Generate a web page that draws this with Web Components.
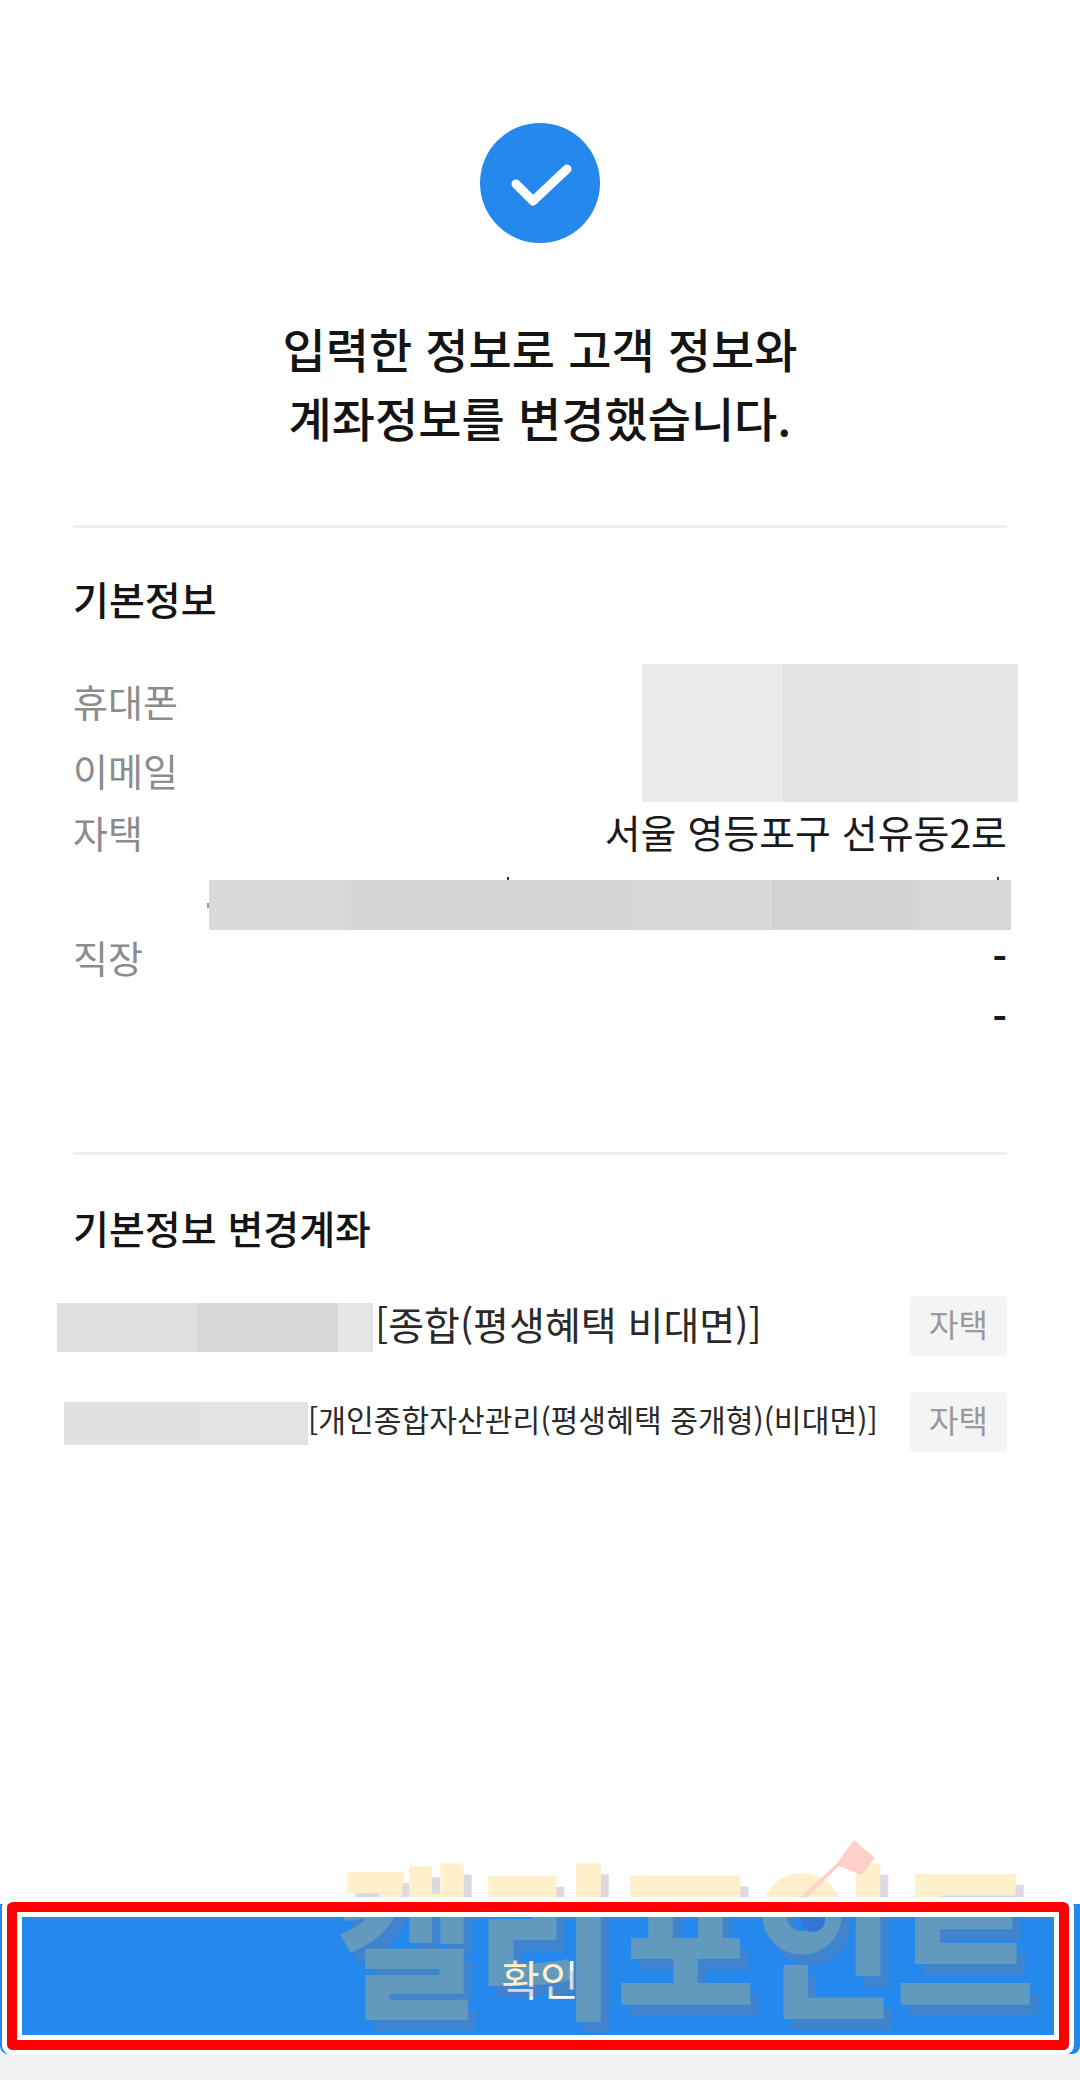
<!DOCTYPE html>
<html lang="ko">
<head>
<meta charset="utf-8">
<title>변경 완료</title>
<style>
  html, body { margin: 0; padding: 0; background: #fff; }
  body { font-family: "Noto Sans CJK KR", "Noto Sans", sans-serif; }
</style>
</head>
<body>
<result-page>
  <check-badge></check-badge>
  <result-title>입력한 정보로 고객 정보와<br>계좌정보를 변경했습니다.</result-title>

  <info-section heading="기본정보" class="basic">
    <info-row label="휴대폰" size="70"></info-row>
    <info-row label="이메일" size="68"></info-row>
    <info-row label="자택" size="56">서울 영등포구 선유동2로</info-row>
    <info-row size="67"></info-row>
    <info-row label="직장" size="60"><b>-</b></info-row>
    <info-row size="60"><b>-</b></info-row>
    <mask-block slot="over" style="left:642px;top:136px;width:376px;height:138px" cells="#ebebeb:140,#e4e4e4:141,#e6e6e6:95"></mask-block>
    <mask-block slot="over" style="left:507px;top:349px;width:2px;height:3px" cells="#333333:2"></mask-block>
    <mask-block slot="over" style="left:997px;top:349px;width:2px;height:3px" cells="#333333:2"></mask-block>
    <mask-block slot="over" style="left:207px;top:375px;width:2px;height:5px" cells="#999999:2"></mask-block>
    <mask-block slot="over" style="left:209px;top:352px;width:802px;height:50px" cells="#d9d9d9:141,#d6d6d6:146,#d5d5d5:136,#d8d8d8:140,#d2d2d2:141,#d7d7d7:98"></mask-block>
  </info-section>

  <info-section heading="기본정보 변경계좌" class="accounts">
    <account-row badge="자택" inset="57" gap="2" size="39" tall="60">
      <mask-block slot="mask" style="width:316px;height:49px;margin-top:3px" cells="#e0e0e0:140,#d8d8d8:141,#e6e6e6:35"></mask-block>
      [종합(평생혜택 비대면)]
    </account-row>
    <account-row badge="자택" inset="64" gap="0" size="30.2" tall="60">
      <mask-block slot="mask" style="width:244px;height:43px;margin-top:3px" cells="#e2e2e2:136,#e3e3e3:108"></mask-block>
      [개인종합자산관리(평생혜택 중개형)(비대면)]
    </account-row>
  </info-section>

  <confirm-bar slot="footer">확인</confirm-bar>
  <water-mark slot="over">캘리포인트</water-mark>
  <red-callout slot="over"></red-callout>
</result-page>

<script>
// page shell: column with a footer pinned by flex, overlays on top
class ResultPage extends HTMLElement {
  constructor() {
    super();
    this.attachShadow({ mode: 'open' }).innerHTML = `
      <style>
        :host { display: flex; flex-direction: column; position: relative; width: 1080px; height: 2080px; overflow: hidden; background: #fff; }
        .body { flex: 1; display: flex; flex-direction: column; padding-top: 123px; }
      </style>
      <div class="body"><slot></slot></div>
      <slot name="footer"></slot>
      <slot name="over"></slot>`;
  }
}

class CheckBadge extends HTMLElement {
  constructor() {
    super();
    this.attachShadow({ mode: 'open' }).innerHTML = `
      <style>
        :host { display: block; align-self: center; width: 120px; height: 120px; }
        svg { display: block; }
      </style>
      <svg width="120" height="120" viewBox="0 0 120 120">
        <circle cx="60" cy="60" r="60" fill="#2488ec"/>
        <path d="M36 61 L53 78 L87 46" fill="none" stroke="#fff" stroke-width="9" stroke-linecap="round" stroke-linejoin="round"/>
      </svg>`;
  }
}

class ResultTitle extends HTMLElement {
  constructor() {
    super();
    this.attachShadow({ mode: 'open' }).innerHTML = `
      <style>
        :host { display: block; margin-top: 70px; height: 212px; text-align: center; font-size: 47px; line-height: 69px; font-weight: 500; color: #141414; }
      </style>
      <slot></slot>`;
  }
}

class InfoSection extends HTMLElement {
  constructor() {
    super();
    const h = this.getAttribute('heading');
    this.attachShadow({ mode: 'open' }).innerHTML = `
      <style>
        :host { display: block; position: relative; margin: 0 73px; width: 934px; border-top: 3px solid #eeeeee; }
        :host(.basic) { height: 624px; }
        h2 { margin: 0; font-size: 39px; line-height: 56px; font-weight: 500; color: #141414; padding-top: 42px; padding-bottom: 39px; }
        :host(.accounts) h2 { padding-top: 44px; padding-bottom: 41px; }
        .over { position: absolute; left: -73px; top: 0; }
      </style>
      <h2>${h}</h2>
      <slot></slot>
      <div class="over"><slot name="over"></slot></div>`;
  }
}

class InfoRow extends HTMLElement {
  constructor() {
    super();
    const label = this.getAttribute('label') || '';
    const size = this.getAttribute('size') || 60;
    this.attachShadow({ mode: 'open' }).innerHTML = `
      <style>
        :host { display: flex; align-items: center; justify-content: space-between; height: ${size}px; font-size: 38px; }
        .label { color: #8c8c8c; font-weight: 400; }
        .value { color: #1a1a1a; margin-left: auto; font-size: 39px; }
      </style>
      <span class="label">${label}</span>
      <span class="value"><slot></slot></span>`;
  }
}

// grey censor patch made of blurred-out pixel cells
class MaskBlock extends HTMLElement {
  constructor() {
    super();
    const cells = (this.getAttribute('cells') || '').split(',').map(c => {
      const [color, w] = c.split(':');
      return `<i style="background:${color};width:${w}px"></i>`;
    }).join('');
    this.attachShadow({ mode: 'open' }).innerHTML = `
      <style>
        :host { display: flex; flex: none; overflow: hidden; }
        i { display: block; height: 100%; flex: none; }
      </style>
      ${cells}`;
  }
  connectedCallback() {
    if (this.parentElement && this.parentElement.localName === 'info-section') {
      this.style.position = 'absolute';
    }
  }
}

class AccountRow extends HTMLElement {
  constructor() {
    super();
    const inset = this.getAttribute('inset');
    const gap = this.getAttribute('gap');
    const size = this.getAttribute('size');
    const tall = this.getAttribute('tall');
    const badge = this.getAttribute('badge');
    this.attachShadow({ mode: 'open' }).innerHTML = `
      <style>
        :host { display: flex; align-items: center; height: ${tall}px; margin-left: ${inset - 73}px; margin-bottom: 36px; }
        .name { margin-left: ${gap}px; margin-bottom: 6px; font-size: ${size}px; color: #2a2a2a; white-space: nowrap; }
        .badge { margin-left: auto; width: 97px; height: 60px; box-sizing: border-box; padding-bottom: 6px; display: flex; align-items: center; justify-content: center; background: #f4f4f4; border-radius: 4px; color: #9a9a9a; font-size: 32px; }
      </style>
      <slot name="mask"></slot>
      <span class="name"><slot></slot></span>
      <span class="badge">${badge}</span>`;
  }
}

class ConfirmBar extends HTMLElement {
  constructor() {
    super();
    this.attachShadow({ mode: 'open' }).innerHTML = `
      <style>
        :host { display: block; background: #f0f1f2; padding-bottom: 26px; }
        button { display: flex; align-items: center; justify-content: center; width: 100%; height: 150px; border: 0; border-radius: 0 0 8px 8px; background: #2488ec; color: #fff; font: inherit; font-size: 42px; padding: 0 0 4px; }
      </style>
      <button><slot></slot></button>`;
  }
}

class WaterMark extends HTMLElement {
  constructor() {
    super();
    this.attachShadow({ mode: 'open' }).innerHTML = `
      <style>
        :host { display: block; position: absolute; left: 336px; top: 1836px; width: 720px; height: 190px; opacity: .28; pointer-events: none; }
        .txt { position: absolute; left: 0; top: -8px; font-size: 152px; line-height: 190px; font-weight: 900; color: #ffc846; white-space: nowrap; text-shadow: 8px 10px 0 #8a7a8a; transform: scaleY(1.1); transform-origin: 0 0; }
        svg { position: absolute; left: 0; top: 0; }
      </style>
      <div class="txt"><slot></slot></div>
      <svg width="720" height="190" viewBox="0 0 720 190">
        <path d="M464 62 L468 64 L503 30 L525 39 L539 22 L518 4 L501 27 Z" fill="#ff5a40"/>
        <circle cx="477" cy="84" r="12" fill="#5a4aa0"/>
      </svg>`;
  }
}

// the red highlight someone drew over the button, with its white halo
class RedCallout extends HTMLElement {
  constructor() {
    super();
    this.attachShadow({ mode: 'open' }).innerHTML = `
      <style>
        :host { display: block; position: absolute; left: 2px; top: 1897px; width: 1072px; height: 158px; box-sizing: border-box; border: 5px solid #fff; border-radius: 10px; pointer-events: none; }
        .red { height: 100%; box-sizing: border-box; border: 10px solid #ff0000; border-radius: 6px; }
        .inner { height: 100%; box-sizing: border-box; border: 5px solid #fff; }
      </style>
      <div class="red"><div class="inner"></div></div>`;
  }
}

customElements.define('result-page', ResultPage);
customElements.define('check-badge', CheckBadge);
customElements.define('result-title', ResultTitle);
customElements.define('info-section', InfoSection);
customElements.define('info-row', InfoRow);
customElements.define('mask-block', MaskBlock);
customElements.define('account-row', AccountRow);
customElements.define('confirm-bar', ConfirmBar);
customElements.define('water-mark', WaterMark);
customElements.define('red-callout', RedCallout);
</script>
</body>
</html>
